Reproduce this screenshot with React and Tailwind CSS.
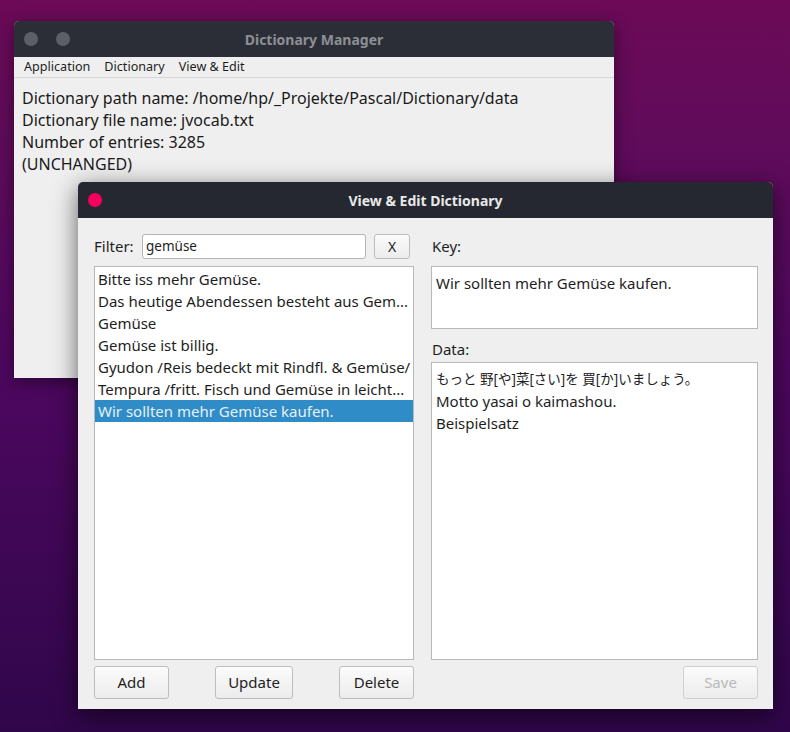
import React from 'react'

const font = { fontFamily: '"Noto Sans", "Open Sans", sans-serif' }

const items = [
  'Bitte iss mehr Gemüse.',
  'Das heutige Abendessen besteht aus Gem...',
  'Gemüse',
  'Gemüse ist billig.',
  'Gyudon /Reis bedeckt mit Rindfl. & Gemüse/',
  'Tempura /fritt. Fisch und Gemüse in leicht...',
  'Wir sollten mehr Gemüse kaufen.',
]

const Btn = ({ children, w, disabled }) => (
  <button
    className={
      'h-[33px] rounded-[3px] border bg-gradient-to-b from-[#fbfbfb] to-[#ececec] text-[15px] ' +
      (disabled ? 'text-[#b9b9b9] border-[#d0d0d0]' : 'text-[#1e1e1e] border-[#bdbdbd]')
    }
    style={{ width: w }}
  >
    {children}
  </button>
)

const MainWindow = () => (
  <div className="absolute left-[14px] top-[21px] w-[600px] h-[357px] rounded-t-[5px] overflow-hidden bg-[#efefef] shadow-[0_4px_18px_rgba(0,0,0,0.45)] flex flex-col">
    <div className="h-[36px] bg-[#2c2e37] flex items-center relative">
      <div className="flex gap-[18px] pl-[10px]">
        <span className="w-[14px] h-[14px] rounded-full bg-[#5d5f66]" />
        <span className="w-[14px] h-[14px] rounded-full bg-[#5d5f66]" />
      </div>
      <div className="absolute inset-0 flex items-center justify-center pointer-events-none">
        <span className="text-[14px] font-bold text-[#8d8f95]">Dictionary Manager</span>
      </div>
    </div>
    <div className="h-[21px] border-b border-[#d6d6d6] flex items-center gap-[14px] pl-[10px] text-[12.6px] text-[#1e1e1e]">
      <span>Application</span>
      <span>Dictionary</span>
      <span>View &amp; Edit</span>
    </div>
    <div className="pt-[9px] pl-[8px] text-[16px] leading-[22px] text-[#1a1a1a]">
      <div>Dictionary path name: /home/hp/_Projekte/Pascal/Dictionary/data</div>
      <div>Dictionary file name: jvocab.txt</div>
      <div>Number of entries: 3285</div>
      <div>(UNCHANGED)</div>
    </div>
  </div>
)

const Dialog = () => (
  <div className="absolute left-[78px] top-[182px] w-[695px] h-[527px] rounded-t-[5px] overflow-hidden bg-[#efefef] shadow-[0_6px_24px_rgba(0,0,0,0.6)] flex flex-col">
    <div className="h-[36px] bg-[#252830] flex items-center relative shrink-0">
      <span className="ml-[10px] w-[14px] h-[14px] rounded-full bg-[#f5005c]" />
      <div className="absolute inset-0 flex items-center justify-center pointer-events-none">
        <span className="text-[14px] font-bold text-[#e8e8e8]">View &amp; Edit Dictionary</span>
      </div>
    </div>
    <div className="flex-1 flex gap-[17px] pl-[16px] pr-[15px] pt-[16px] pb-[10px] text-[15px] text-[#1e1e1e]">
      <div className="w-[320px] flex flex-col">
        <div className="h-[25px] flex items-center">
          <span className="w-[48px]">Filter:</span>
          <div className="w-[224px] h-[25px] rounded-[3px] border border-[#b5b5b5] bg-white flex items-center pl-[3px] text-[13.5px]">
            gemüse
          </div>
          <button className="ml-[8px] w-[36px] h-[25px] rounded-[3px] border border-[#bdbdbd] bg-gradient-to-b from-[#fbfbfb] to-[#ececec] text-[14px]">
            X
          </button>
        </div>
        <div className="mt-[7px] flex-1 border border-[#b8b8b8] bg-white pt-[1px]">
          {items.map((t, i) => (
            <div
              key={i}
              className={
                'h-[22px] leading-[22px] pl-[3px] whitespace-nowrap overflow-hidden ' +
                (i === 6 ? 'bg-[#308cc6] text-[#e6f0f8]' : '')
              }
            >
              {t}
            </div>
          ))}
        </div>
        <div className="mt-[6px] flex justify-between">
          <Btn w={75}>Add</Btn>
          <Btn w={78}>Update</Btn>
          <Btn w={75}>Delete</Btn>
        </div>
      </div>
      <div className="flex-1 flex flex-col">
        <div className="h-[25px] flex items-center pl-[1px]">Key:</div>
        <div className="mt-[7px] h-[63px] border border-[#b8b8b8] bg-white px-[4px] pt-[5px] leading-[22px]">
          Wir sollten mehr Gemüse kaufen.
        </div>
        <div className="h-[33px] flex items-end pb-[2px] pl-[1px]">Data:</div>
        <div className="flex-1 border border-[#b8b8b8] bg-white px-[4px] pt-[5px] leading-[22px]" style={{ fontFamily: '"Noto Sans", "Noto Sans CJK JP", sans-serif' }}>
          <div className="text-[13.5px]">もっと 野[や]菜[さい]を 買[か]いましょう。</div>
          <div>Motto yasai o kaimashou.</div>
          <div>Beispielsatz</div>
        </div>
        <div className="mt-[6px] flex justify-end">
          <Btn w={75} disabled>Save</Btn>
        </div>
      </div>
    </div>
  </div>
)

export default function App() {
  return (
    <div
      className="relative w-[790px] h-[732px] overflow-hidden bg-gradient-to-b from-[#6c0a57] via-[#4e0760] to-[#30064a]"
      style={font}
    >
      <MainWindow />
      <Dialog />
    </div>
  )
}
